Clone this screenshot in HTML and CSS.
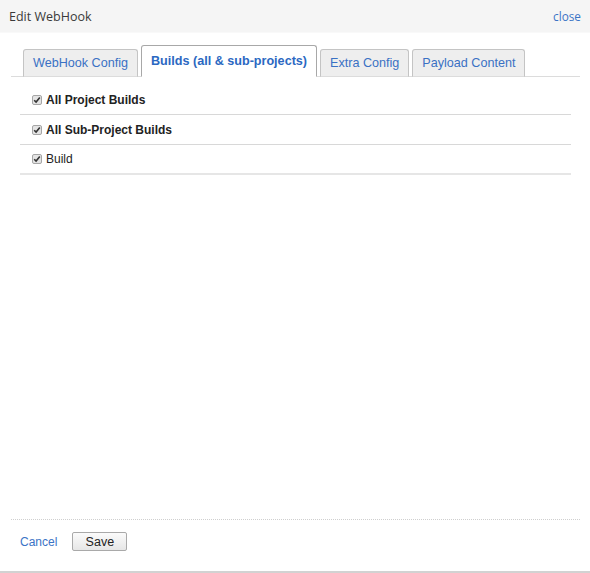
FILE: index.html
```html
<!DOCTYPE html>
<html>
<head>
<meta charset="utf-8">
<title>Edit WebHook</title>
<link rel="stylesheet" href="styles.css">
</head>
<body>
<div class="dialog">
  <div class="header">
    <span class="title">Edit WebHook</span>
    <a class="close" href="#">close</a>
  </div>
  <div class="content">
    <ul class="tabs">
      <li class="tab">WebHook Config</li>
      <li class="tab active">Builds (all &amp; sub-projects)</li>
      <li class="tab">Extra Config</li>
      <li class="tab">Payload Content</li>
    </ul>
    <div class="panel">
      <label class="row bold">
        <span class="check"><svg width="8" height="8" viewBox="0 0 8 8"><path d="M1.2 4.2 L3.1 6.1 L6.8 1.6" fill="none" stroke="#333" stroke-width="1.6"/></svg></span>
        All Project Builds
      </label>
      <label class="row bold">
        <span class="check"><svg width="8" height="8" viewBox="0 0 8 8"><path d="M1.2 4.2 L3.1 6.1 L6.8 1.6" fill="none" stroke="#333" stroke-width="1.6"/></svg></span>
        All Sub-Project Builds
      </label>
      <label class="row last">
        <span class="check"><svg width="8" height="8" viewBox="0 0 8 8"><path d="M1.2 4.2 L3.1 6.1 L6.8 1.6" fill="none" stroke="#333" stroke-width="1.6"/></svg></span>
        Build
      </label>
    </div>
  </div>
  <div class="footer">
    <a class="cancel" href="#">Cancel</a>
    <button class="save" type="button">Save</button>
  </div>
</div>
</body>
</html>
```
FILE: styles.css
```css
html, body {
  margin: 0;
  padding: 0;
  background: #fff;
}
.dialog {
  width: 590px;
  height: 573px;
  box-sizing: border-box;
  border-bottom: 2px solid #d2d2d2;
  display: flex;
  flex-direction: column;
  font-family: "Liberation Sans", Arial, sans-serif;
}
.header {
  height: 33px;
  background: #f5f5f5;
  display: flex;
  align-items: center;
  justify-content: space-between;
  padding: 0 9px;
  border-bottom: 1px solid #f9f9f9;
  box-sizing: border-box;
}
.title {
  font-family: "Open Sans", sans-serif;
  font-size: 12.5px;
  color: #3a3a3a;
}
.close {
  font-family: "Open Sans", sans-serif;
  font-size: 11.8px;
  color: #3b74c6;
  text-decoration: none;
}
.content {
  flex: 1;
  padding-top: 12px;
}
.tabs {
  list-style: none;
  margin: 0 10px 0 11px;
  padding: 0 0 0 12px;
  display: flex;
  align-items: flex-end;
  gap: 3px;
  border-bottom: 1px solid #dcdcdc;
  height: 31px;
  box-sizing: content-box;
}
.tab {
  box-sizing: border-box;
  padding: 0 9px;
  margin-bottom: -1px;
  height: 28px;
  display: flex;
  align-items: center;
  background: #eeeeee;
  border: 1px solid #c4c4c4;
  border-bottom: 1px solid #dcdcdc;
  border-radius: 3px 3px 0 0;
  font-size: 12.6px;
  color: #3a71c4;
}
.tab.active {
  height: 32px;
  background: #fff;
  border-color: #a8a8a8;
  border-bottom-color: #fff;
  font-weight: bold;
  color: #2b68c2;
  padding: 0 9px;
}
.panel {
  margin: 0 19px 0 20px;
  padding-top: 8px;
}
.row {
  height: 30px;
  box-sizing: border-box;
  border-bottom: 1px solid #d8d8d8;
  display: flex;
  align-items: center;
  padding-left: 12px;
  font-size: 12px;
  color: #222;
  gap: 4px;
}
.row.last {
  border-bottom: 2px solid #e6e6e6;
}
.row.bold {
  font-weight: bold;
}
.check {
  width: 10px;
  height: 10px;
  box-sizing: border-box;
  border: 1px solid #a6a6a6;
  border-radius: 2px;
  background: #e4e4e4;
  display: flex;
  align-items: center;
  justify-content: center;
}
.check svg {
  display: block;
}
.footer {
  margin: 0 10px 0 11px;
  border-top: 1px dotted #cfcfcf;
  padding: 12px 0 20px 9px;
  display: flex;
  align-items: center;
  gap: 15px;
}
.cancel {
  font-size: 12px;
  color: #3b74c6;
  text-decoration: none;
}
.save {
  width: 55px;
  height: 19px;
  padding: 0;
  font-family: "Liberation Sans", Arial, sans-serif;
  font-size: 12.5px;
  color: #222;
  background: linear-gradient(#fbfbfb, #e6e6e6);
  border: 1px solid #a9a9a9;
  border-radius: 2px;
}
```
